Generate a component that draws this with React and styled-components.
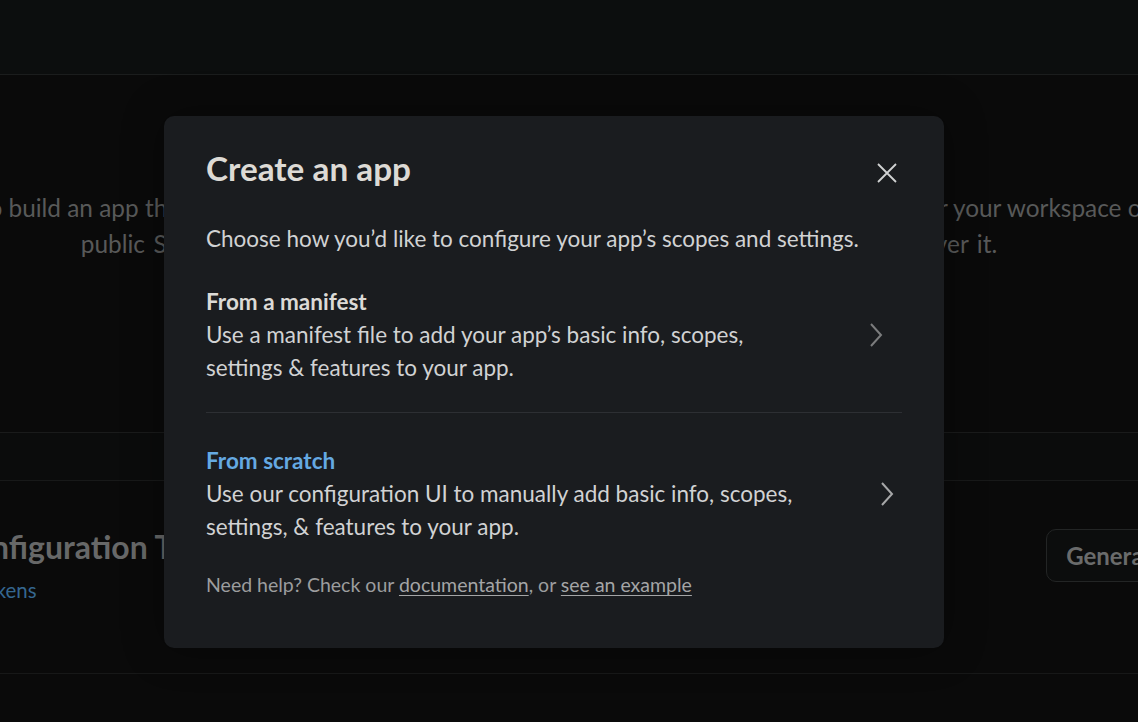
import React from 'react';
import styled, { createGlobalStyle } from 'styled-components';

const GlobalStyle = createGlobalStyle`
  html, body {
    margin: 0;
    padding: 0;
    background: #0a0a0a;
    font-family: Lato, "Noto Sans", "Liberation Sans", sans-serif;
    overflow: hidden;
  }
  * { box-sizing: border-box; }
`;

const Screen = styled.div`
  position: relative;
  width: 1138px;
  height: 722px;
  overflow: hidden;
  background: #0a0a0a;
`;

const TopBar = styled.header`
  height: 75px;
  background: #0c0e0e;
  border-bottom: 1px solid #1b1d1d;
`;

const Page = styled.main`
  width: 1578px;
  margin-left: -250px;
`;

const Intro = styled.section`
  height: 357px;
  padding-top: 115px;
  text-align: center;
  color: #585959;
  font-size: 24.4px;
  line-height: 36px;
  white-space: nowrap;
`;

const IntroLine = styled.span`
  display: block;
  word-spacing: ${(p) => p.spread || 0}px;
`;

const Band = styled.div`
  height: 49px;
  border-top: 1px solid #1a1b1b;
  border-bottom: 1px solid #181919;
  background: #0b0c0c;
`;

const TokenRow = styled.section`
  height: 193px;
  display: flex;
  align-items: flex-start;
  justify-content: space-between;
  padding: 47px 74px 0 64px;
  border-bottom: 1px solid #171818;
`;

const TokenText = styled.div`
  display: flex;
  flex-direction: column;
  gap: 9px;
  white-space: nowrap;
`;

const TokenTitle = styled.h2`
  margin: 0;
  font-size: 32px;
  line-height: 38px;
  font-weight: 700;
  color: #676868;
`;

const TokenLink = styled.a`
  font-size: 20.4px;
  line-height: 30px;
  color: #356790;
  text-decoration: none;
`;

const GhostButton = styled.button`
  height: 53px;
  margin-top: 1px;
  padding: 0 19px;
  border: 1px solid #232525;
  border-radius: 10px;
  background: #0c0d0d;
  color: #6a6b6b;
  font-family: inherit;
  font-size: 24px;
  font-weight: 700;
  white-space: nowrap;
`;

const Modal = styled.div`
  position: absolute;
  left: 164px;
  top: 116px;
  width: 780px;
  height: 532px;
  padding: 33px 42px 0;
  border-radius: 10px;
  background: #1a1c1f;
  color: #d1d2d3;
  box-shadow: 0 0 40px rgba(0, 0, 0, 0.35);
`;

const ModalHeader = styled.div`
  display: flex;
  align-items: flex-start;
  justify-content: space-between;
`;

const ModalTitle = styled.h1`
  margin: 0;
  font-size: 33.3px;
  line-height: 38px;
  font-weight: 700;
  color: #dddad5;
`;

const CloseButton = styled.button`
  width: 36px;
  height: 36px;
  margin: 6px -3px 0 0;
  display: flex;
  align-items: center;
  justify-content: center;
  border: 0;
  padding: 0;
  background: transparent;
  color: #d1d2d3;
`;

const Lead = styled.p`
  margin: 31px 0 0;
  font-size: 22.5px;
  line-height: 33px;
`;

const Option = styled.div`
  display: flex;
  align-items: center;
  justify-content: space-between;
  padding: ${(p) => (p.divided ? '30px 0 28px' : '31px 0 0')};
  border-bottom: ${(p) => (p.divided ? '1px solid #2d2f33' : 'none')};
`;

const OptionText = styled.div`
  font-size: 22.5px;
  line-height: 33px;
`;

const OptionTitle = styled.div`
  font-weight: 700;
  color: ${(p) => (p.active ? '#65a9e2' : '#dcdad6')};
`;

const Chevron = styled.span`
  display: flex;
  margin-right: ${(p) => p.inset}px;
  color: ${(p) => p.tone};
`;

const Help = styled.p`
  margin: 27px 0 0;
  font-size: 19.5px;
  line-height: 30px;
  color: #9c9d9e;

  a {
    color: #a4a5a6;
    text-decoration: underline;
    text-underline-offset: 3px;
  }
`;

const ChevronIcon = () => (
  <svg width="14" height="26" viewBox="0 0 14 26" fill="none">
    <polyline points="2,2 12,13 2,24" stroke="currentColor" strokeWidth="2" />
  </svg>
);

export default function App() {
  return (
    <Screen>
      <GlobalStyle />
      <TopBar />
      <Page>
        <Intro>
          <IntroLine>
            Use our APIs to build an app that makes people’s working life better. You can create an app that’s just for your workspace or create a
          </IntroLine>
          <IntroLine spread={2.3}>
            public Slack app to list in the App Directory, where anyone on Slack can discover it.
          </IntroLine>
        </Intro>
        <Band />
        <TokenRow>
          <TokenText>
            <TokenTitle>Your App Configuration Tokens</TokenTitle>
            <TokenLink href="#">Learn more about tokens</TokenLink>
          </TokenText>
          <GhostButton>Generate Token</GhostButton>
        </TokenRow>
      </Page>

      <Modal>
        <ModalHeader>
          <ModalTitle>Create an app</ModalTitle>
          <CloseButton aria-label="Close">
            <svg width="20" height="20" viewBox="0 0 20 20">
              <path d="M1 1L19 19M19 1L1 19" stroke="currentColor" strokeWidth="1.8" />
            </svg>
          </CloseButton>
        </ModalHeader>
        <Lead>Choose how you’d like to configure your app’s scopes and settings.</Lead>

        <Option divided>
          <OptionText>
            <OptionTitle>From a manifest</OptionTitle>
            Use a manifest file to add your app’s basic info, scopes,
            <br />
            settings &amp; features to your app.
          </OptionText>
          <Chevron inset={19} tone="#7b7c7d">
            <ChevronIcon />
          </Chevron>
        </Option>

        <Option>
          <OptionText>
            <OptionTitle active>From scratch</OptionTitle>
            Use our configuration UI to manually add basic info, scopes,
            <br />
            settings, &amp; features to your app.
          </OptionText>
          <Chevron inset={8} tone="#a6a7a8">
            <ChevronIcon />
          </Chevron>
        </Option>

        <Help>
          Need help? Check our <a href="#">documentation</a>, or <a href="#">see an example</a>
        </Help>
      </Modal>
    </Screen>
  );
}
